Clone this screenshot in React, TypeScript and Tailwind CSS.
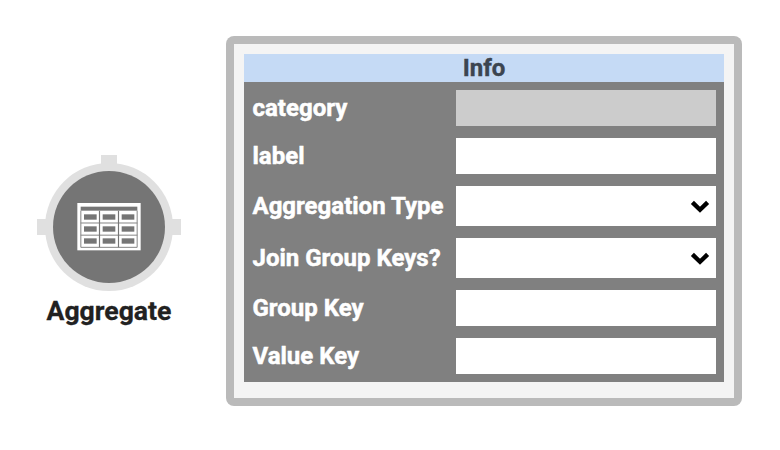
import React from "react";

type Field = { label: string; kind: "disabled" | "text" | "select" };

const fields: Field[] = [
  { label: "category", kind: "disabled" },
  { label: "label", kind: "text" },
  { label: "Aggregation Type", kind: "select" },
  { label: "Join Group Keys?", kind: "select" },
  { label: "Group Key", kind: "text" },
  { label: "Value Key", kind: "text" },
];

function Chevron() {
  return (
    <svg className="mr-[6px] h-5 w-5" viewBox="0 0 20 20" fill="none">
      <path d="M2.4 6.400 L10 13.800 L17.6 6.400" stroke="#000" strokeWidth="4.4" />
    </svg>
  );
}

function NodeIcon() {
  return (
    <svg className="h-[136px] w-36" viewBox="0 0 144 136">
      <g fill="#e0e0e0">
        <rect x="64" y="0" width="16" height="16" />
        <rect x="0" y="64" width="16" height="16" />
        <rect x="128" y="64" width="16" height="16" />
        <circle cx="72" cy="72" r="64" />
      </g>
      <circle cx="72" cy="72" r="56" fill="#757575" />
      <g transform="translate(33 40) scale(0.33333)">
        <rect x="22" y="24" width="190" height="142" fill="#fff" />
        <rect x="32" y="35" width="170" height="12" fill="#757575" />
        <path
          d="M32.5 47V157H201.5V47M32 84H202M32 120.500H202"
          fill="none"
          stroke="#858585"
          strokeWidth="3"
        />
        <path d="M88.500 47V157M145.500 47V157" stroke="#757575" strokeWidth="3.5" />
        {[58, 94, 130].map((y) =>
          [42, 98, 155].map((x) => (
            <rect key={`${x}-${y}`} x={x} y={y} width="38" height="16" fill="#757575" />
          ))
        )}
      </g>
    </svg>
  );
}

export default function App() {
  return (
    <div className="flex h-[450px] w-[780px] items-start overflow-hidden bg-white font-['Roboto',sans-serif] text-2xl font-bold">
      <div className="ml-[37px] mt-[155px] flex w-36 flex-col items-center">
        <NodeIcon />
        <div className="mt-[4px] whitespace-nowrap text-[26.6px] leading-8 text-[#212121] [-webkit-text-stroke:0.3px_#212121]">
          Aggregate
        </div>
      </div>
      <section className="ml-[45px] mt-9 h-[370px] w-[516px] rounded-lg bg-[#bababa] p-2">
        <div className="h-full bg-[#f4f4f4] p-[10px]">
          <h2 className="h-7 bg-[#c5daf5] text-center leading-7 text-[#3c4550] [-webkit-text-stroke:0.4px_#3c4550]">
            Info
          </h2>
          <div className="flex flex-col gap-3 bg-[#808080] p-2">
            {fields.map(({ label, kind }) => (
              <label
                key={label}
                className={`flex items-center justify-between ${kind === "select" ? "h-10" : "h-9"}`}
              >
                <span className="whitespace-nowrap pl-[0.5px] text-white [-webkit-text-stroke:0.5px_#fff]">
                  {label}
                </span>
                <span
                  className={`flex h-full w-[260px] items-center justify-end ${
                    kind === "disabled" ? "bg-[#cccccc]" : "bg-white"
                  }`}
                >
                  {kind === "select" && <Chevron />}
                </span>
              </label>
            ))}
          </div>
        </div>
      </section>
    </div>
  );
}
